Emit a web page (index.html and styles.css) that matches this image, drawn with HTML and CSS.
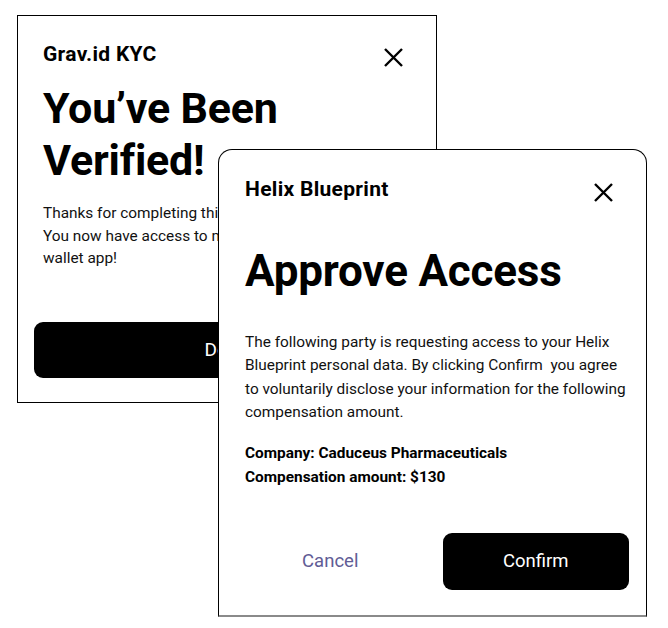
FILE: index.html
```html
<!DOCTYPE html>
<html lang="en">
<head>
    <meta charset="UTF-8">
    <meta name="viewport" content="width=device-width, initial-scale=1.0">
    <title>Wallet Dialogs</title>
    <link rel="stylesheet" href="styles.css">
</head>
<body>
    <div class="dialog kyc">
        <div class="head">
            <span class="app">Grav.id KYC</span>
            <svg class="close" width="21" height="21" viewBox="0 0 21 21"><path d="M2 2L19 19M19 2L2 19" stroke="#000" stroke-width="2.4" fill="none"/></svg>
        </div>
        <h1>You’ve Been Verified!</h1>
        <p class="text">Thanks for completing this process.<br>You now have access to more features in the<br>wallet app!</p>
        <button class="primary wide">Done</button>
    </div>

    <div class="dialog approve">
        <div class="head">
            <span class="app">Helix Blueprint</span>
            <svg class="close" width="21" height="21" viewBox="0 0 21 21"><path d="M2 2L19 19M19 2L2 19" stroke="#000" stroke-width="2.4" fill="none"/></svg>
        </div>
        <h1>Approve Access</h1>
        <p class="text">The following party is requesting access to your Helix Blueprint personal data. By clicking Confirm&nbsp; you agree to voluntarily disclose your information for the following compensation amount.</p>
        <div class="details">
            <div>Company: Caduceus Pharmaceuticals</div>
            <div>Compensation amount: $130</div>
        </div>
        <div class="actions">
            <button class="link">Cancel</button>
            <button class="primary">Confirm</button>
        </div>
    </div>
</body>
</html>
```

FILE: styles.css
```css
* { box-sizing: border-box; }
body { margin: 0; background: #fff; font-family: Roboto, "Noto Sans", sans-serif; color: #000; width: 668px; height: 628px; position: relative; overflow: hidden; }

.dialog { position: absolute; background: #fff; border: 1px solid #000; }
.kyc { left: 17px; top: 15px; width: 420px; height: 388px; padding: 26px 32px 0 25px; }
.approve { left: 218px; top: 149px; width: 429px; height: 468px; padding: 27px 18px 0 26px; border-radius: 14px 14px 0 0; border-bottom: 2px solid #8a8a8a; }

.head { display: flex; justify-content: space-between; align-items: center; height: 24px; }
.approve .head { padding-right: 14px; }
.app { font-size: 21px; line-height: 24px; font-weight: 700; letter-spacing: 0.3px; }
.close { display: block; margin-top: 6px; }

h1 { font-size: 43px; line-height: 52px; font-weight: 700; margin: 16px 0 0; letter-spacing: -0.2px; }
.approve h1 { margin-top: 44px; font-size: 44px; }

.text { font-size: 15.4px; line-height: 22.5px; margin: 16px 0 0; color: #111; }
.approve .text { line-height: 23.33px; margin-top: 34px; }

.details { margin-top: 18px; font-size: 15.4px; line-height: 23.33px; font-weight: 700; }

button { font-family: inherit; border: none; cursor: pointer; }
.primary { background: #000; color: #fff; font-size: 18.5px; border-radius: 9px; height: 56px; }
.wide { display: block; width: 385px; margin: 52px 0 0 -9px; font-size: 19px; }

.actions { display: flex; gap: 19px; margin: 44px -1px 0 -8px; }
.actions button { flex: 1; height: 57px; }
.link { background: none; color: #615c95; font-size: 18.5px; }
```
